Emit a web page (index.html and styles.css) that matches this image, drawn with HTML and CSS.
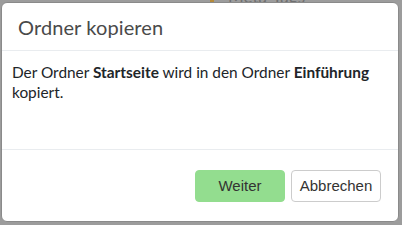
FILE: index.html
```
<!DOCTYPE html>
<html lang="de">
<head>
<meta charset="utf-8">
<link rel="stylesheet" href="styles.css">
</head>
<body>
<div class="page">
  <div class="behind"><span class="behind-icon"></span><span class="behind-text">Meta-Tags</span></div>
</div>
<div class="modal">
  <div class="modal-header">
    <h5 class="modal-title">Ordner kopieren</h5>
  </div>
  <div class="modal-body">
    <p>Der Ordner <b>Startseite</b> wird in den Ordner <b>Einführung</b> kopiert.</p>
  </div>
  <div class="modal-footer">
    <button class="btn btn-primary">Weiter</button>
    <button class="btn btn-default">Abbrechen</button>
  </div>
</div>
</body>
</html>
```
FILE: styles.css
```
html, body {
  margin: 0;
  padding: 0;
  width: 402px;
  height: 225px;
  overflow: hidden;
}
body {
  background: #9c9c9c;
  font-family: "Lato", "Open Sans", sans-serif;
  position: relative;
}
.page {
  height: 225px;
}
.behind {
  display: flex;
  align-items: center;
  gap: 14px;
  padding-left: 210px;
  margin-top: -14px;
  height: 20px;
  color: #6f6f6f;
  font-size: 17px;
}
.behind-icon {
  width: 4px;
  height: 14px;
  background: #b58a3a;
}
.modal {
  position: absolute;
  left: 1px;
  top: 2px;
  width: 398px;
  height: 220px;
  box-sizing: border-box;
  background: #fff;
  border: 1px solid #8a8a8a;
  border-radius: 6px;
  display: flex;
  flex-direction: column;
}
.modal-header {
  padding: 12px 16px 11px;
  border-bottom: 1px solid #e9ecef;
}
.modal-title {
  margin: 0;
  font-size: 20px;
  font-weight: 400;
  line-height: 24px;
  color: #4a4a4a;
  letter-spacing: 0.1px;
}
.modal-body {
  padding: 11px 10px;
  height: 76px;
  border-bottom: 1px solid #e9ecef;
}
.modal-body p {
  margin: 0;
  font-size: 15.4px;
  line-height: 20px;
  color: #212529;
}
.modal-body b {
  font-weight: 700;
}
.modal-footer {
  flex: 1;
  display: flex;
  justify-content: flex-end;
  align-items: center;
  gap: 6px;
  padding: 0 17px 0 0;
}
.btn {
  width: 90px;
  height: 32px;
  box-sizing: border-box;
  font-family: "Liberation Sans", Arial, sans-serif;
  font-size: 15px;
  color: #333;
  border-radius: 4px;
  padding: 0;
}
.btn-primary {
  background: #93dd8f;
  border: 1px solid #93dd8f;
}
.btn-default {
  background: #fff;
  border: 1px solid #ccc;
}
```
